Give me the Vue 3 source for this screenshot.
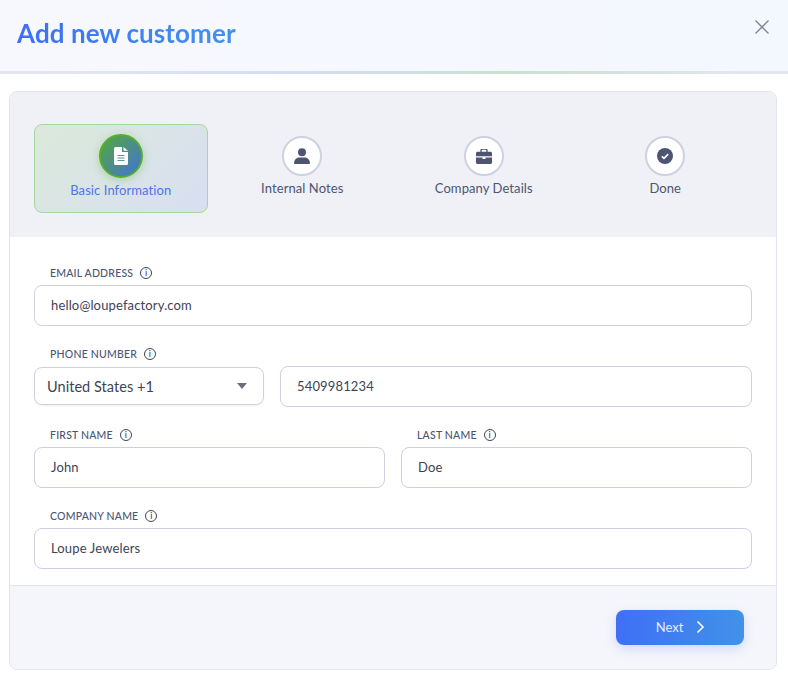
<script setup>
const steps = [
  { name: 'Basic Information', icon: 'doc' },
  { name: 'Internal Notes', icon: 'user' },
  { name: 'Company Details', icon: 'case' },
  { name: 'Done', icon: 'check' }
]
</script>

<template>
  <div class="modal">
    <header class="head">
      <h1>Add new customer</h1>
      <svg class="close" width="16" height="16" viewBox="0 0 16 16">
        <path d="M1.5 1.5l13 13M14.5 1.5l-13 13" stroke="#7d8290" stroke-width="1.3" fill="none" />
      </svg>
    </header>

    <div class="card">
      <div class="steps">
        <div class="step" v-for="(s, i) in steps" :key="s.name" :class="{ active: i == 0 }">
          <div class="circle">
            <svg v-if="s.icon == 'doc'" width="14" height="18" viewBox="0 0 14 18">
              <path d="M1.5 0H8v5h6v11.5a1.5 1.5 0 0 1-1.500 1.500h-11A1.500 1.500 0 0 1 0 16.500v-15A1.500 1.500 0 0 1 1.500 0z" fill="#fff" />
              <path d="M9.500 0L14 3.800H9.500z" fill="#fff" />
              <path d="M3.500 8.500h7M3.500 11h7M3.500 13.500h7" stroke="#5b9a8f" stroke-width="1.200" />
            </svg>
            <svg v-if="s.icon == 'user'" width="16" height="16" viewBox="0 0 16 16">
              <circle cx="8" cy="4.200" r="4" fill="#4d5573" />
              <path d="M0.800 16c-.5 0-.8-.4-.8-.9C.2 11.800 2.400 9.500 5 9.500h6c2.600 0 4.800 2.300 5 5.600 0 .5-.3.900-.8.900z" fill="#4d5573" />
            </svg>
            <svg v-if="s.icon == 'case'" width="16" height="15" viewBox="0 0 16 15">
              <path d="M5 3V1.500C5 .7 5.700 0 6.500 0h3c.8 0 1.500.7 1.500 1.500V3" stroke="#4d5573" stroke-width="1.300" fill="none" />
              <path d="M1.500 2.800h13c.8 0 1.500.7 1.500 1.500v3H0v-3c0-.8.7-1.500 1.500-1.500z" fill="#4d5573" />
              <path d="M0 8.500h6.500V10h3V8.500H16v5c0 .8-.7 1.500-1.500 1.500h-13C.7 15 0 14.300 0 13.500z" fill="#4d5573" />
            </svg>
            <svg v-if="s.icon == 'check'" width="16" height="16" viewBox="0 0 16 16">
              <circle cx="8" cy="8" r="8" fill="#4d5573" />
              <path d="M4.800 8.300l2.200 2.100 4.200-4.300" stroke="#fff" stroke-width="1.700" fill="none" />
            </svg>
          </div>
          <span class="step-name">{{ s.name }}</span>
        </div>
      </div>

      <div class="form">
        <div class="field">
          <label>EMAIL ADDRESS <i class="info">i</i></label>
          <div class="input">hello@loupefactory.com</div>
        </div>

        <div class="field">
          <label>PHONE NUMBER <i class="info">i</i></label>
          <div class="phone">
            <div class="select">
              <span>United States +1</span>
              <b class="caret"></b>
            </div>
            <div class="input">5409981234</div>
          </div>
        </div>

        <div class="two">
          <div class="field">
            <label>FIRST NAME <i class="info">i</i></label>
            <div class="input">John</div>
          </div>
          <div class="field">
            <label>LAST NAME <i class="info">i</i></label>
            <div class="input">Doe</div>
          </div>
        </div>

        <div class="field">
          <label>COMPANY NAME <i class="info">i</i></label>
          <div class="input">Loupe Jewelers</div>
        </div>
      </div>

      <footer class="foot">
        <button class="next">
          <span>Next</span>
          <svg width="9" height="14" viewBox="0 0 9 14">
            <path d="M1.500 1.500L7 7l-5.500 5.500" stroke="#fff" stroke-width="1.600" fill="none" />
          </svg>
        </button>
      </footer>
    </div>
  </div>
</template>

<style scoped>
.modal {
  width: 788px;
  height: 684px;
  font-family: "Lato", "Noto Sans", sans-serif;
  color: #3d4356;
  overflow: hidden;
}

.head {
  height: 71px;
  display: flex;
  justify-content: space-between;
  background: linear-gradient(90deg, #f7f8fe, #f3f8fe);
  border-bottom: 3px solid;
  border-image: linear-gradient(90deg, #e3e6ef 5%, #d5def8 35%, #c8e2cc 65%, #e3e6ef 95%) 1;
  padding: 0 18px 0 17px;
}

.head h1 {
  margin: 16px 0 0;
  font-size: 26px;
  line-height: 34px;
  font-weight: 700;
  height: 34px;
  letter-spacing: .1px;
  background: linear-gradient(90deg, #3e6ef5, #4192ea);
  -webkit-background-clip: text;
  background-clip: text;
  color: transparent;
}

.close {
  margin-top: 19px;
}

.card {
  margin: 17px 11px 0 9px;
  height: 579px;
  box-sizing: border-box;
  border: 1px solid #e3e5ec;
  border-radius: 8px;
  overflow: hidden;
  display: flex;
  flex-direction: column;
}

.steps {
  height: 145px;
  box-sizing: border-box;
  background: #eff1f6;
  padding: 32px 24px 0;
  display: grid;
  grid-template-columns: repeat(4, 1fr);
  gap: 8px;
  align-items: start;
}

.step {
  height: 89px;
  box-sizing: border-box;
  display: flex;
  flex-direction: column;
  align-items: center;
  padding-top: 11px;
  border: 1px solid transparent;
  border-radius: 8px;
}

.step.active {
  background: linear-gradient(135deg, #dbe9da, #d8dff2);
  border-color: #a8d6a0;
  padding-top: 9px;
}

.circle {
  width: 40px;
  height: 40px;
  box-sizing: border-box;
  border-radius: 50%;
  border: 2px solid #cdd1e0;
  background: #fff;
  display: flex;
  align-items: center;
  justify-content: center;
}

.active .circle {
  width: 44px;
  height: 44px;
  border: 2px solid #55ad2c;
  background: linear-gradient(135deg, #55a93a, #4173d8);
  box-shadow: 0 2px 8px rgba(85, 173, 44, .35);
}

.step-name {
  margin-top: 3px;
  font-size: 13px;
  line-height: 18px;
  letter-spacing: .08px;
  color: #4d5573;
}

.active .step-name {
  margin-top: 3px;
  color: #4d74e8;
}

.form {
  flex: 1;
  background: #fff;
  padding: 28px 24px 0;
  display: flex;
  flex-direction: column;
  gap: 20px;
}

.two .field {
  flex: 1;
  min-width: 0;
}

label {
  display: flex;
  align-items: center;
  height: 16px;
  padding-left: 16px;
  margin-bottom: 4px;
  font-size: 10.500px;
  font-weight: 500;
  color: #4d5573;
  letter-spacing: .2px;
}

.info {
  width: 12px;
  height: 12px;
  box-sizing: border-box;
  margin-left: 7px;
  border: 1px solid #3d4356;
  border-radius: 50%;
  font-style: normal;
  font-size: 9px;
  line-height: 10px;
  text-align: center;
  color: #3d4356;
}

.input {
  flex: 1;
  height: 41px;
  box-sizing: border-box;
  border: 1px solid #cdd0e0;
  border-radius: 8px;
  padding: 0 16px;
  display: flex;
  align-items: center;
  font-size: 13px;
  color: #3d4356;
  letter-spacing: .15px;
  padding-bottom: 1px;
}

.phone {
  display: flex;
  align-items: flex-start;
  gap: 16px;
}

.select {
  width: 230px;
  height: 38px;
  margin-top: 1px;
  box-sizing: border-box;
  border: 1px solid #cdd0e0;
  border-radius: 8px;
  padding: 0 16px 0 12px;
  display: flex;
  align-items: center;
  justify-content: space-between;
  font-size: 14.500px;
  letter-spacing: .05px;
  color: #3d4356;
  box-shadow: 0 1px 2px rgba(60, 70, 110, .08);
}

.caret {
  width: 0;
  height: 0;
  border-left: 5.500px solid transparent;
  border-right: 5.500px solid transparent;
  border-top: 6px solid #6b6f7c;
}

.two {
  display: flex;
  gap: 16px;
}

.foot {
  height: 84px;
  box-sizing: border-box;
  background: #f5f6fb;
  border-top: 1px solid #e3e5ec;
  padding: 24px 32px 0 0;
  display: flex;
  justify-content: flex-end;
  align-items: flex-start;
}

.next {
  width: 128px;
  height: 35px;
  border: 0;
  border-radius: 8px;
  background: linear-gradient(90deg, #3f6ff6, #4192e8);
  box-shadow: 0 4px 12px rgba(65, 110, 245, .2);
  color: #e8edfd;
  font-family: inherit;
  font-size: 13px;
  display: flex;
  align-items: center;
  justify-content: center;
  gap: 13px;
  padding: 0 0 1px 1px;
}
</style>
